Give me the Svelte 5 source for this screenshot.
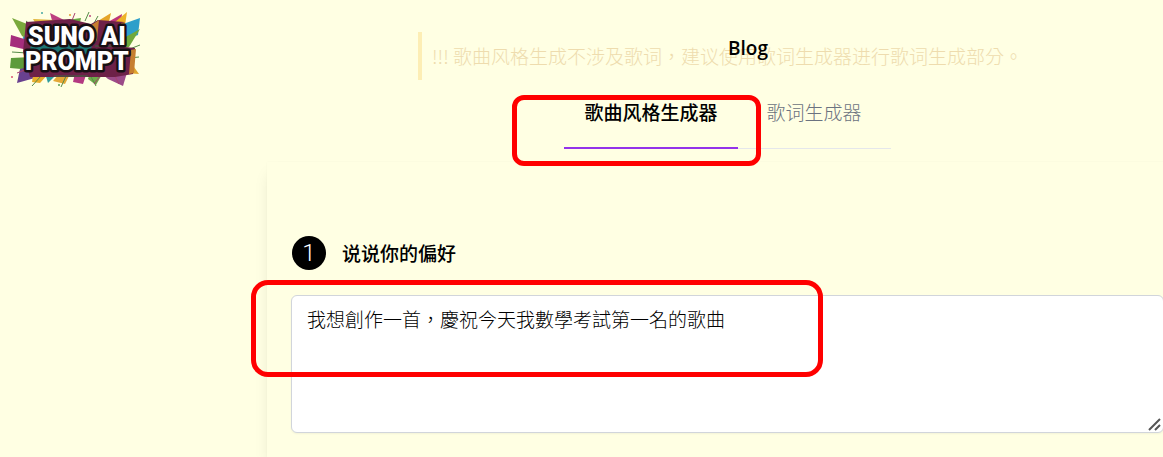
<script lang="ts">
  let active = $state('style');
  let idea = $state('我想創作一首，慶祝今天我數學考試第一名的歌曲');

  const tabs = [
    { id: 'style', label: '歌曲风格生成器' },
    { id: 'lyrics', label: '歌词生成器' }
  ];
</script>

<div class="page">
  <header>
    <a class="logo" href="/" aria-label="Suno AI Prompt">
      <svg width="134" height="80" viewBox="0 0 134 80">
        <g>
          <path fill="#7aa93c" d="M2 10 32 22 30 40 12 28Z" />
          <path fill="#39a7c4" d="M13 29 26 24 32 42 12 36Z" />
          <path fill="#a52d7c" d="M1 27 24 34 22 43 0 38Z" />
          <path fill="#5d9b3b" d="M1 50 22 49 22 62 0 60Z" />
          <path fill="#69418f" d="M10 61 26 57 32 68 7 75Z" />
          <path fill="#e7ac2c" d="M24 62 40 64 30 75 22 74Z" />
          <path fill="#bd3f80" d="M40 5 58 14 60 24 44 20Z" />
          <path fill="#e2b63b" d="M23 11 45 12 44 23 28 20Z" />
          <path fill="#68a942" d="M57 12 71 10 68 24 58 21Z" />
          <path fill="#e5a528" d="M88 13 101 5 98 18 84 23Z" />
          <path fill="#bc357a" d="M98 14 112 6 110 22 98 25Z" />
          <path fill="#edb228" d="M105 14 117 4 113 31 106 29Z" />
          <path fill="#2d9fca" d="M113 16 130 10 128 27 112 33Z" />
          <path fill="#70a83b" d="M112 31 130 21 119 39 110 42Z" />
          <path fill="#e1a72f" d="M119 52 129 66 115 65Z" />
          <path fill="#b33981" d="M65 65 76 67 73 76 63 74Z" />
          <path fill="#9b4b89" d="M91 65 119 58 113 78 98 71Z" />
          <path fill="#6daa49" d="M80 65 94 63 86 77 78 71Z" />
          <path fill="#e4a837" d="M49 66 61 64 55 76 43 73Z" />
          <path fill="#2e9c9e" d="M35 65 48 65 38 75Z" />
        </g>
        <g stroke-width="1" fill="none">
          <path stroke="#558b48" d="M16 13 32 26M75 13 79 4M83 17 88 8M2 44 17 45M117 42 130 37M119 50 129 49M57 66 51 79M80 67 86 78M31 68 22 78" />
          <path stroke="#aa416e" d="M61 15 65 5M7 65 20 60M91 67 84 76M104 66 109 76" />
        </g>
        <g>
          <circle cx="32" cy="5" r="1" fill="#45a7a3" />
          <circle cx="60" cy="7" r="1" fill="#e39e31" />
          <circle cx="80" cy="8" r="1" fill="#ba477d" />
          <circle cx="2" cy="69" r="1" fill="#d85572" />
          <circle cx="49" cy="77" r="1" fill="#5b9f4f" />
        </g>
        <path fill="#6d2148" d="M16 14 60 11 81 16 88 12 114 14 115 39 125 40 123 66 105 69 20 69 13 44Z" />
        <path fill="#1d7774" d="M21 38 52 35 82 37 80 45 62 49 17 48Z" />
        <path fill="#c77f30" d="M80 18 89 12 87 32 82 37ZM111 15 115 14 116 39 111 39ZM121 42 126 41 124 65 119 66Z" />
        <path fill="none" stroke="#3d6b40" d="M85 38 114 38M44 68 78 68" />
        <text x="18" y="37">SUNO AI</text>
        <text x="15" y="62">PROMPT</text>
      </svg>
    </a>
    <nav><a href="/blog">Blog</a></nav>
  </header>

  <main lang="zh-Hant">
    <p class="notice">!!! 歌曲风格生成不涉及歌词，建议使用歌词生成器进行歌词生成部分。</p>

    <div class="tabs" role="tablist">
      {#each tabs as tab (tab.id)}
        <button
          role="tab"
          class:active={active === tab.id}
          aria-selected={active === tab.id}
          onclick={() => (active = tab.id)}
        >{tab.label}</button>
      {/each}
      <span class="mark mark-tab" aria-hidden="true"></span>
    </div>

    <section class="card">
      <label for="idea"><span class="step">1</span>说说你的偏好</label>
      <div class="field">
        <textarea id="idea" bind:value={idea}></textarea>
        <svg class="grip" width="14" height="14" viewBox="0 0 14 14" aria-hidden="true">
          <path d="M1 13 12 2M7 13 12 8" />
        </svg>
        <span class="mark mark-idea" aria-hidden="true"></span>
      </div>
    </section>
  </main>
</div>

<style>
  :global(body) {
    margin: 0;
    background: #ffffe3;
  }

  .page {
    position: relative;
    overflow: hidden;
    font-family: 'Noto Sans CJK TC', sans-serif;
    font-size: 19px;
    line-height: 28px;
    font-weight: 300;
    color: #000;
  }

  header {
    position: absolute;
    z-index: 2;
    top: 0;
    left: 0;
    right: -25px;
    height: 96px;
    display: grid;
    grid-template-columns: 308px 1fr;
    align-items: center;
    pointer-events: none;
  }

  header a {
    color: #000;
    text-decoration: none;
    pointer-events: auto;
  }

  .logo {
    justify-self: start;
    padding-left: 10px;
  }

  .logo svg { display: block; }

  .logo text {
    font-family: Roboto, sans-serif;
    font-size: 25px;
    font-weight: 900;
    fill: #fff;
    stroke: #171014;
    stroke-width: 5px;
    stroke-linejoin: round;
    paint-order: stroke;
  }

  nav {
    text-align: center;
    font-family: 'Open Sans', sans-serif;
    font-weight: 600;
  }

  main {
    margin: 0 -25px 0 267px;
    padding-top: 32px;
    display: flex;
    flex-direction: column;
    align-items: center;
  }

  .notice {
    margin: 0;
    padding: 10px 14px 10px 10px;
    border-left: 4px solid #fdeeb5;
    color: #eedcae;
  }

  .tabs {
    position: relative;
    display: flex;
    margin-top: 4px;
  }

  .tabs button {
    height: 65px;
    padding: 0 29px 8px;
    border: 0;
    border-bottom: 1px solid #e5e7eb;
    background: none;
    color: #6b7280;
    font: inherit;
    cursor: pointer;
  }

  .tabs .active {
    padding: 0 20px 7px;
    border-bottom: 2px solid #9333ea;
    color: #000;
    font-weight: 500;
  }

  .card {
    box-sizing: border-box;
    align-self: stretch;
    margin-top: 13px;
    padding: 74px 24px 24px;
    box-shadow: 0 10px 15px -3px rgba(0, 0, 0, 0.1), 0 0 2px rgba(0, 0, 0, 0.03);
  }

  label {
    display: flex;
    align-items: center;
    gap: 16px;
    padding-left: 1px;
    font-weight: 500;
  }

  .step {
    width: 34px;
    height: 34px;
    border-radius: 50%;
    background: #000;
    color: #fff;
    font-family: Roboto, sans-serif;
    font-size: 24px;
    font-weight: 300;
    line-height: 34px;
    text-align: center;
  }

  .field {
    position: relative;
    margin-top: 25px;
  }

  textarea {
    display: block;
    box-sizing: border-box;
    width: 100%;
    height: 138px;
    padding: 9px 15px;
    border: 1px solid #d1d5db;
    border-radius: 6px;
    background: #fff;
    box-shadow: 0 1px 2px rgba(0, 0, 0, 0.05);
    color: #000;
    font: inherit;
    outline: none;
    resize: vertical;
  }

  textarea::-webkit-resizer { background: transparent; }

  .grip {
    position: absolute;
    right: 2px;
    bottom: 2px;
    fill: none;
    stroke: #555;
    stroke-width: 2;
    pointer-events: none;
  }

  .mark {
    position: absolute;
    box-sizing: border-box;
    border: 5px solid #f00;
    pointer-events: none;
  }

  .mark-tab {
    top: 11px;
    left: -52px;
    width: 249px;
    height: 71px;
    border-radius: 12px;
  }

  .mark-idea {
    top: -15px;
    left: -40px;
    width: 572px;
    height: 97px;
    border-radius: 17px;
  }
</style>
